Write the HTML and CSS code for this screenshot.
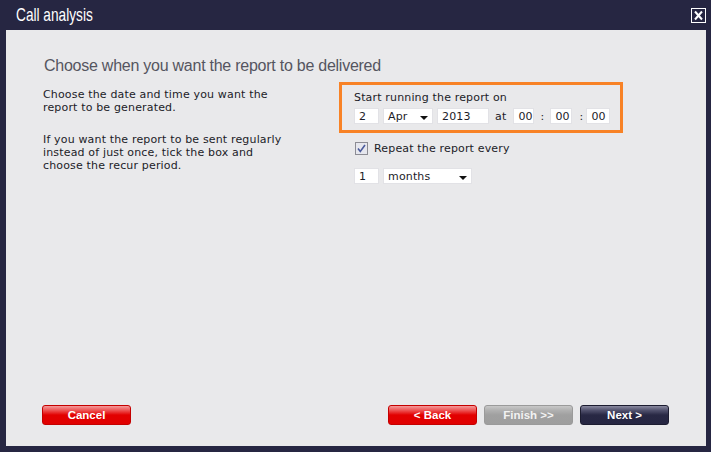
FILE: index.html
```html
<!DOCTYPE html>
<html lang="en">
<head>
    <meta charset="UTF-8">
    <title>Call analysis</title>
    <link rel="stylesheet" href="styles.css">
</head>
<body>
    <div class="titlebar">
        <span class="title">Call analysis</span>
        <button class="close-btn" aria-label="Close">
            <svg width="15" height="15" viewBox="0 0 15 15">
                <rect x="0.5" y="0.5" width="14" height="14" fill="none" stroke="#fff"/>
                <path d="M4 3.5 L11 11.5 M11 3.5 L4 11.5" stroke="#fff" stroke-width="2"/>
            </svg>
        </button>
    </div>
    <div class="panel">
        <h1 class="heading">Choose when you want the report to be delivered</h1>
        <div class="content">
            <div class="help">
                <p>Choose the date and time you want the<br>report to be generated.</p>
                <p>If you want the report to be sent regularly<br>instead of just once, tick the box and<br>choose the recur period.</p>
            </div>
            <div class="form">
                <div class="start-box">
                    <div class="label">Start running the report on</div>
                    <div class="field-row">
                        <div class="input w-day">2</div>
                        <div class="select w-month">Apr<span class="arrow"></span></div>
                        <div class="input w-year">2013</div>
                        <span class="at">at</span>
                        <div class="input w-hh">00</div>
                        <span class="colon">:</span>
                        <div class="input w-mm">00</div>
                        <span class="colon">:</span>
                        <div class="input w-ss">00</div>
                    </div>
                </div>
                <label class="repeat-row">
                    <svg class="check" width="13" height="13" viewBox="0 0 13 13">
                        <rect x="0.5" y="0.5" width="12" height="12" fill="#e6e7ee" stroke="#8c8c94"/>
                        <path d="M3 6.5 L5.3 9.5 L10 3" fill="none" stroke="#4b5b9c" stroke-width="1.6"/>
                    </svg>
                    Repeat the report every
                </label>
                <div class="field-row recur-row">
                    <div class="input w-day">1</div>
                    <div class="select w-period">months<span class="arrow"></span></div>
                </div>
            </div>
        </div>
        <div class="footer">
            <button class="btn btn-red">Cancel</button>
            <div class="nav-buttons">
                <button class="btn btn-red">&lt; Back</button>
                <button class="btn btn-grey">Finish &gt;&gt;</button>
                <button class="btn btn-navy">Next &gt;</button>
            </div>
        </div>
    </div>
</body>
</html>
```

FILE: styles.css
```css
body {
    margin: 0;
    padding: 0;
    width: 711px;
    height: 452px;
    background-color: #262642;
    font-family: "DejaVu Sans", Verdana, sans-serif;
    font-size: 11px;
    letter-spacing: 0.16px;
    color: #1c1c28;
    overflow: hidden;
}

.titlebar {
    display: flex;
    justify-content: space-between;
    align-items: center;
    height: 30px;
    padding: 0 5px 0 16px;
}

.title {
    font-family: "Liberation Sans", Arial, sans-serif;
    font-size: 19px;
    letter-spacing: 0;
    color: #fff;
    margin-top: -1px;
    transform: scaleX(0.72);
    transform-origin: left center;
}

.close-btn {
    background: transparent;
    border: none;
    padding: 0;
    width: 15px;
    height: 15px;
    display: block;
    cursor: pointer;
}

.close-btn svg {
    display: block;
}

.panel {
    display: flex;
    flex-direction: column;
    height: 416px;
    margin: 0 5px 0 6px;
    background-color: #e9e9eb;
    box-sizing: border-box;
    padding: 27px 0 21px 0;
}

.heading {
    margin: 0 0 0 38px;
    font-family: "Liberation Sans", Arial, sans-serif;
    font-weight: normal;
    font-size: 16px;
    letter-spacing: -0.25px;
    line-height: 18px;
    color: #555560;
}

.content {
    display: flex;
    margin-top: 7px;
    padding-left: 37px;
}

.help {
    width: 296px;
    padding-top: 6px;
}

.help p {
    margin: 0 0 19px 0;
    line-height: 13px;
}

.start-box {
    width: 284px;
    height: 51px;
    box-sizing: border-box;
    border: 3px solid #f88226;
    padding: 6px 0 0 12px;
}

.label {
    line-height: 13px;
}

.field-row {
    display: flex;
    align-items: center;
    margin-top: 4px;
}

.input, .select {
    position: relative;
    height: 16px;
    line-height: 16px;
    box-sizing: border-box;
    background-color: #fff;
    border: 1px solid #e2e2e6;
    padding-left: 4px;
    color: #1c1c28;
}

.w-day { width: 25px; margin-right: 4px; }
.w-month { width: 50px; margin-right: 4px; }
.w-year { width: 52px; }
.w-hh { width: 21px; }
.w-mm { width: 22px; }
.w-ss { width: 24px; }
.w-period { width: 89px; }

.at {
    margin: 0 7px 0 6px;
}

.colon {
    width: 16px;
    text-align: center;
}

.w-mm + .colon {
    width: 14px;
    text-align: right;
    padding-right: 3px;
    box-sizing: border-box;
}

.arrow {
    position: absolute;
    right: 4px;
    top: 7px;
    width: 0;
    height: 0;
    border-left: 4px solid transparent;
    border-right: 4px solid transparent;
    border-top: 4px solid #111;
}

.repeat-row {
    display: flex;
    align-items: center;
    gap: 6px;
    margin-top: 9px;
    padding-left: 16px;
    line-height: 13px;
}

.check {
    display: block;
}

.recur-row {
    margin-top: 13px;
    padding-left: 15px;
}

.footer {
    display: flex;
    justify-content: space-between;
    margin-top: auto;
    padding: 0 37px 0 36px;
}

.nav-buttons {
    display: flex;
    gap: 7px;
}

.btn {
    width: 89px;
    height: 20px;
    padding: 0;
    border-radius: 3px;
    font-family: "Liberation Sans", Arial, sans-serif;
    font-weight: bold;
    font-size: 11.5px;
    letter-spacing: 0;
    color: #fff;
    cursor: pointer;
}

.btn-red {
    border: 1px solid #c40000;
    background: linear-gradient(#f49a9a 0%, #ee5050 25%, #e20000 50%, #e00000 100%);
}

.btn-grey {
    border: 1px solid #9a9a9a;
    background: linear-gradient(#c8c8c8 0%, #b0b0b0 25%, #a0a0a0 50%, #9e9e9e 100%);
    color: #f2f2f2;
}

.btn-navy {
    border: 1px solid #1c1c30;
    background: linear-gradient(#8a8aa0 0%, #50506c 25%, #282844 50%, #262642 100%);
}
```
